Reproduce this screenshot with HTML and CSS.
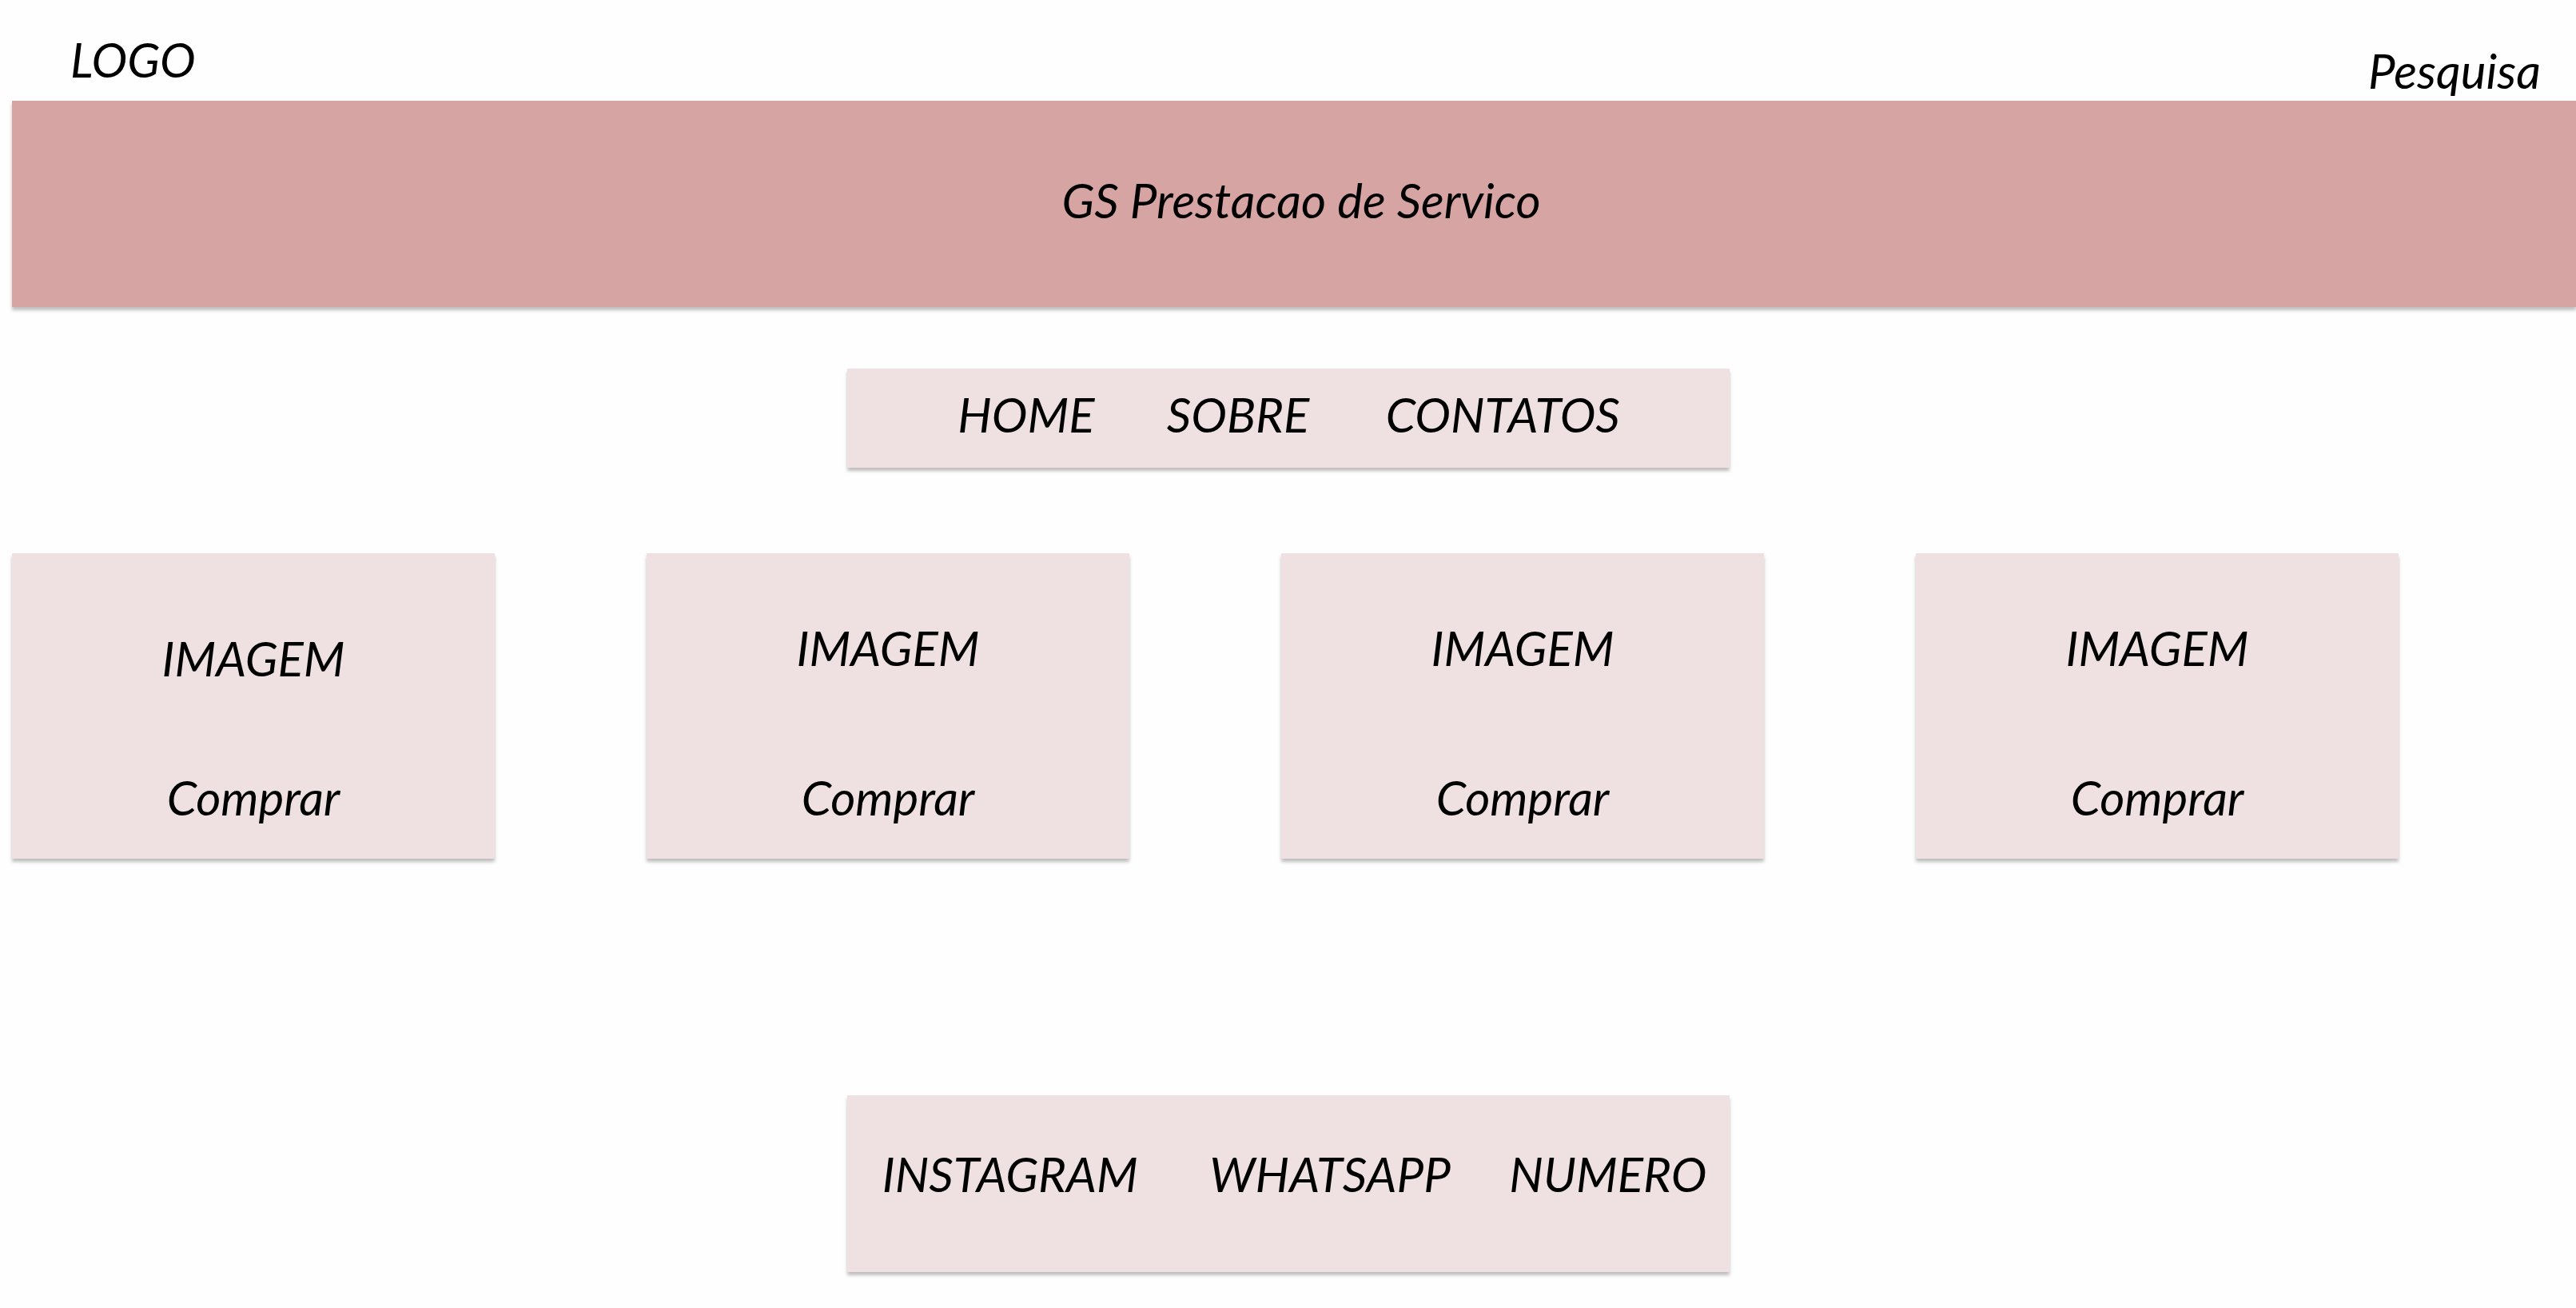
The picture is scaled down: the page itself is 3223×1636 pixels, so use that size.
FILE: index.html
```html
<!DOCTYPE html>
<html lang="pt">
<head>
  <meta charset="utf-8">
  <meta name="viewport" content="width=device-width, initial-scale=1">
  <title>GS Prestacao de Servico</title>
  <link rel="stylesheet" href="styles.css">
</head>
<body>
  <header class="top">
    <a class="logo" href="#">LOGO</a>
    <input class="search" type="text" placeholder="Pesquisa" aria-label="Pesquisa">
  </header>
  <div class="banner surface">
    <h1 class="title">GS Prestacao de Servico</h1>
  </div>
  <nav class="menu panel surface">
    <a href="#">HOME</a>
    <a href="#">SOBRE</a>
    <a href="#">CONTATOS</a>
  </nav>
  <main class="cards">
    <article class="card card-first surface"><p class="picture">IMAGEM</p><button class="buy" type="button">Comprar</button></article>
    <article class="card surface"><p class="picture">IMAGEM</p><button class="buy" type="button">Comprar</button></article>
    <article class="card surface"><p class="picture">IMAGEM</p><button class="buy" type="button">Comprar</button></article>
    <article class="card surface"><p class="picture">IMAGEM</p><button class="buy" type="button">Comprar</button></article>
  </main>
  <footer class="contact panel surface">
    <a href="#">INSTAGRAM</a>
    <a href="#">WHATSAPP</a>
    <a href="#">NUMERO</a>
  </footer>
</body>
</html>
```
FILE: styles.css
```css
* {
  box-sizing: border-box;
}

body {
  margin: 0;
  background: #fefefe;
  color: #000;
  font: italic 400 60px/64px Lato, "Open Sans", sans-serif;
}

a {
  color: inherit;
  text-decoration: none;
}

.surface {
  background: #efe1e1;
  box-shadow: 0 4px 4px rgba(0, 0, 0, 0.25);
}

.top {
  display: flex;
  justify-content: space-between;
  align-items: flex-start;
  min-height: 126px;
  padding: 42px 20px 6px 88px;
}

.search,
.buy {
  padding: 0;
  border: 0;
  background: none;
  color: inherit;
  font: inherit;
}

.search {
  align-self: flex-end;
  width: 240px;
  height: 64px;
}

.search::placeholder {
  color: inherit;
  opacity: 1;
}

.banner {
  margin-left: 15px;
  padding: 92px 0 102px 18px;
  background: #d6a4a2;
  text-align: center;
}

.title {
  margin: 0;
  font: inherit;
}

.panel {
  display: grid;
  max-width: 1104px;
  margin: 0 auto;
  text-align: center;
}

.menu {
  grid-template-columns: 179fr 208fr 311fr;
  gap: 72px;
  margin-top: 77px;
  padding: 25px 128px 35px 135px;
}

.cards {
  display: grid;
  grid-template-columns: repeat(4, 1fr);
  gap: 190px;
  margin: 107px 222px 296px 15px;
}

.card {
  display: flex;
  flex-direction: column;
  justify-content: space-between;
  align-items: center;
  min-height: 382px;
  padding: 86px 0 45px;
}

.card-first {
  padding-top: 99px;
}

.picture {
  margin: 0;
}

.contact {
  grid-template-columns: 368fr 328fr 263fr;
  gap: 52px;
  margin-bottom: 40px;
  padding: 66px 20px 91px;
}
```
